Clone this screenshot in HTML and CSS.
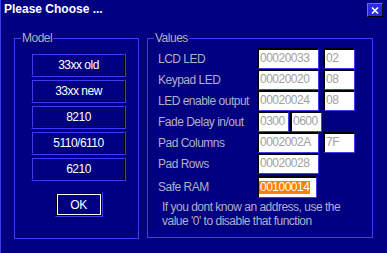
FILE: index.html
```html
<!DOCTYPE html>
<html lang="en">
<head>
    <meta charset="UTF-8">
    <meta name="viewport" content="width=device-width, initial-scale=1.0">
    <title>Please Choose ...</title>
    <link rel="stylesheet" href="styles.css">
</head>
<body>
    <div class="window">
        <div class="titlebar">
            <span class="title">Please Choose ...</span>
            <button class="close-btn" aria-label="Close">
                <svg width="8" height="7" viewBox="0 0 8 7">
                    <path d="M1 0.5 L7 6.5 M7 0.5 L1 6.5" stroke="#ffffff" stroke-width="1.6" fill="none"/>
                </svg>
            </button>
        </div>

        <div class="content">
            <fieldset class="group model-group">
                <legend>Model</legend>
                <div class="model-list">
                    <div class="model-btn"><span>33xx old</span></div>
                    <div class="model-btn"><span>33xx new</span></div>
                    <div class="model-btn"><span>8210</span></div>
                    <div class="model-btn"><span>5110/6110</span></div>
                    <div class="model-btn"><span>6210</span></div>
                    <div class="ok-btn"><span>OK</span></div>
                </div>
            </fieldset>

            <fieldset class="group values-group">
                <legend>Values</legend>
                <div class="values">
                    <div class="row">
                        <span class="label">LCD LED</span>
                        <div class="field addr">00020033</div>
                        <div class="field small">02</div>
                    </div>
                    <div class="row">
                        <span class="label">Keypad LED</span>
                        <div class="field addr">00020020</div>
                        <div class="field small">08</div>
                    </div>
                    <div class="row">
                        <span class="label">LED enable output</span>
                        <div class="field addr">00020024</div>
                        <div class="field small">08</div>
                    </div>
                    <div class="row">
                        <span class="label">Fade Delay in/out</span>
                        <div class="field fade">0300</div>
                        <div class="field fade">0600</div>
                    </div>
                    <div class="row">
                        <span class="label">Pad Columns</span>
                        <div class="field addr">0002002A</div>
                        <div class="field small">7F</div>
                    </div>
                    <div class="row">
                        <span class="label">Pad Rows</span>
                        <div class="field addr">00020028</div>
                    </div>
                    <div class="row safe-row">
                        <span class="label">Safe RAM</span>
                        <div class="field safe"><span class="selected">00100014</span></div>
                    </div>
                </div>
                <p class="note">If you dont know an address, use the<br>value '0' to disable that function</p>
            </fieldset>
        </div>
    </div>
</body>
</html>
```

FILE: styles.css
```css
body {
    margin: 0;
    background-color: #000080;
    font-family: "Liberation Sans", Arial, sans-serif;
    font-size: 12px;
    letter-spacing: -0.5px;
}

.window {
    width: 387px;
    height: 253px;
    box-sizing: border-box;
    background-color: #000080;
    border-left: 1px solid #3c3cf0;
}

.titlebar {
    height: 22px;
    box-sizing: border-box;
    display: flex;
    justify-content: space-between;
    align-items: flex-start;
    padding: 2px 4px 0 3px;
}

.title {
    font-weight: bold;
    font-size: 12px;
    line-height: 15px;
    letter-spacing: 0;
    color: #ffffff;
}

.close-btn {
    width: 16px;
    height: 14px;
    margin-top: 1px;
    padding: 0;
    box-sizing: border-box;
    display: flex;
    justify-content: center;
    align-items: center;
    background-color: #2a2ae0;
    border: 1px solid;
    border-color: #6868ff #000000 #000000 #6868ff;
}

.content {
    display: flex;
    gap: 8px;
    padding: 9px 0 0 13px;
}

.group {
    margin: 0;
    padding: 0;
    min-width: 0;
    box-sizing: border-box;
    border: 1px solid #3c3cf0;
}

.group legend {
    margin-left: 6px;
    padding: 0 1px;
    line-height: 15px;
    color: #b0b0c8;
}

.model-group {
    width: 125px;
    height: 208px;
}

.values-group {
    width: 226px;
    height: 207px;
}

.model-list {
    display: flex;
    flex-direction: column;
    width: 95px;
    padding: 7px 0 0 16px;
}

.model-btn {
    height: 24px;
    margin-bottom: 2px;
    box-sizing: border-box;
    border: 1px solid;
    border-color: transparent #3c3cf0 #3c3cf0 transparent;
}

.model-btn span,
.ok-btn span {
    display: flex;
    justify-content: center;
    align-items: center;
    height: 100%;
    box-sizing: border-box;
    color: #ffffff;
}

.model-btn span {
    border: 1px solid;
    border-color: #3c3cf0 #000000 #000000 #3c3cf0;
}

.ok-btn {
    width: 48px;
    height: 25px;
    margin: 9px auto 0;
    box-sizing: border-box;
    border: 1px solid;
    border-color: transparent #3c3cf0 #3c3cf0 transparent;
}

.ok-btn span {
    border: 1px solid #000000;
    box-shadow: inset 0 0 0 1px #ffffff;
}

.values {
    padding: 2px 0 0 10px;
}

.row {
    display: flex;
    align-items: center;
    height: 21px;
}

.label {
    width: 99px;
    white-space: nowrap;
    color: #b0b0c8;
}

.field {
    height: 21px;
    box-sizing: border-box;
    padding-left: 1px;
    line-height: 17px;
    background-color: #ffffff;
    color: #a0a0a0;
    border-style: solid;
    border-width: 2px 1px 1px 2px;
    border-color: #000000 #3c3cf0 #3c3cf0 #000000;
    white-space: nowrap;
    overflow: hidden;
}

.addr {
    width: 62px;
}

.small {
    width: 32px;
    margin-left: 4px;
}

.fade {
    width: 32px;
}

.fade + .fade {
    margin-left: 1px;
}

.safe-row {
    margin-top: 2px;
    height: 22px;
}

.safe {
    width: 60px;
    height: 22px;
    padding-left: 0;
    line-height: 18px;
}

.selected {
    display: inline-block;
    padding: 0 1px;
    line-height: 13px;
    background-color: #ff8000;
    color: #ffffff;
}

.note {
    margin: 2px 0 0 14px;
    line-height: 14px;
    color: #b0b0c8;
    white-space: nowrap;
}
```
